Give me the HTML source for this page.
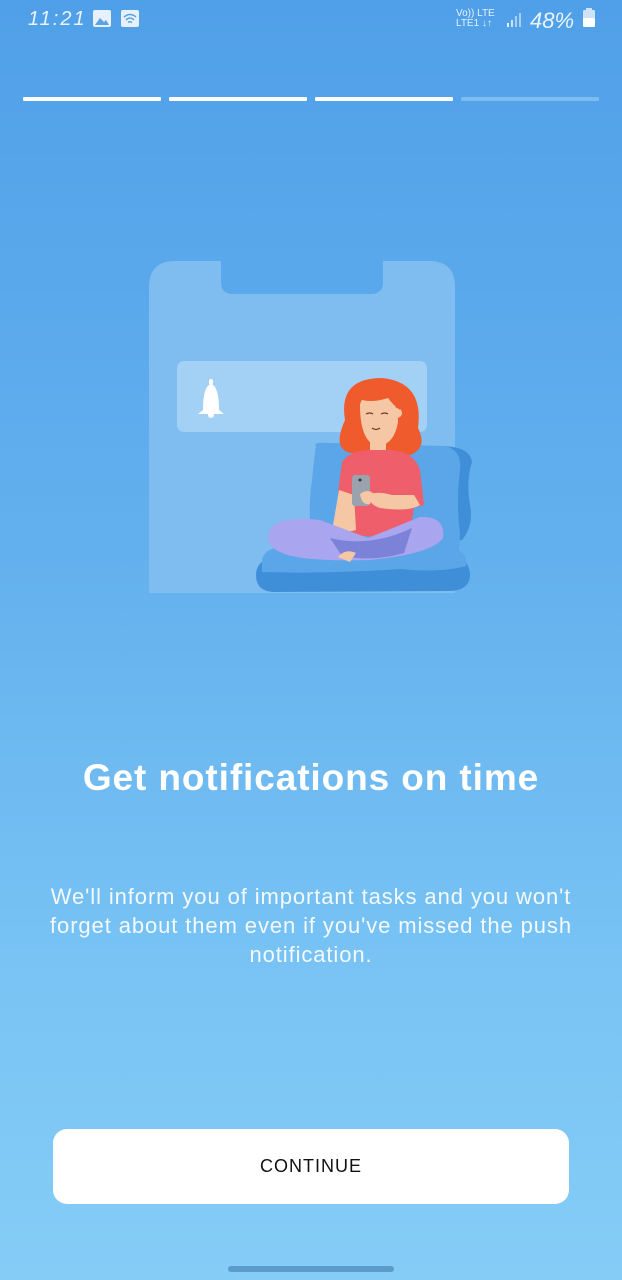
<!DOCTYPE html>
<html><head><meta charset="utf-8">
<style>
html,body{margin:0;padding:0}
body{width:622px;height:1280px;overflow:hidden;position:relative;background:linear-gradient(180deg,#50a0e9 0%,#64b1ee 45%,#78c3f4 75%,#85cdf7 100%);font-family:"Liberation Sans",sans-serif;color:#fff}
.bar{position:absolute;top:97px;height:4px;width:138px;background:#fff;border-radius:1px}
.sb{position:absolute;top:8px;font-size:20px;color:#eaf4fd}
h1{position:absolute;top:756px;left:0;width:622px;text-align:center;margin:0;font-size:37px;line-height:44px;font-weight:bold;letter-spacing:0.9px}
p{position:absolute;top:882px;left:0;width:622px;text-align:center;margin:0;font-size:22px;line-height:29px;color:#f3f9fe;letter-spacing:0.9px;white-space:nowrap}
.btn{position:absolute;left:53px;top:1129px;width:516px;height:75px;background:#fff;border-radius:14px;color:#111;font-size:18px;font-weight:500;text-align:center;line-height:75px;letter-spacing:1px}
.home{position:absolute;left:228px;top:1266px;width:166px;height:6px;border-radius:3px;background:#5c9ccb}
</style></head><body>
<div class="sb" style="left:28px;font-style:italic;letter-spacing:2px">11:21</div>
<svg style="position:absolute;left:93px;top:10px" width="50" height="18"><rect x="0" y="0" width="18" height="17" rx="2" fill="#e6f1fc"/><path d="M2 15 L7 8 L11 12 L13 10 L16 15Z" fill="#5aa2e3"/><rect x="28" y="0" width="18" height="17" rx="2" fill="#e6f1fc"/><path d="M31 7 Q37 2 43 7 M33 10 Q37 6 41 10 M35 12.5 Q37 11 39 12.5" stroke="#5aa2e3" stroke-width="1.5" fill="none"/></svg>
<div style="position:absolute;left:456px;top:9px;font-size:10px;line-height:10px;color:#e6f1fc">Vo)) LTE<br>LTE1 ↓↑</div>
<svg style="position:absolute;left:506px;top:12px" width="16" height="16"><rect x="1" y="11" width="2" height="4" fill="#e6f1fc"/><rect x="5" y="8" width="2" height="7" fill="#cfe3f7" /><rect x="9" y="4" width="2" height="11" fill="#a9cff0"/><rect x="13" y="1" width="2" height="14" fill="#a9cff0"/></svg>
<div class="sb" style="left:530px;font-style:italic;font-size:22px">48%</div>
<svg style="position:absolute;left:582px;top:8px" width="14" height="20"><rect x="4" y="0" width="6" height="3" fill="#cfe3f7"/><rect x="1" y="2" width="12" height="17" rx="1.5" fill="#cfe3f7"/><rect x="1" y="10" width="12" height="9" rx="1.5" fill="#fff"/></svg>
<div class="bar" style="left:23px"></div><div class="bar" style="left:169px"></div><div class="bar" style="left:315px"></div><div class="bar" style="left:461px;background:#7dbcf0"></div>
<svg style="position:absolute;left:0;top:0" width="622" height="700">
<path d="M175 261 H221 V282 Q221 294 233 294 H371 Q383 294 383 282 V261 H429 Q455 261 455 287 V593 H149 V287 Q149 261 175 261Z" fill="#7fbcef"/>
<rect x="177" y="361" width="250" height="71" rx="7" fill="#a3d0f5"/>
<path d="M203 410 Q203 386 211 384 Q219 386 219 410 L224 414 H198Z" fill="#fff"/><rect x="209" y="379" width="4" height="6" rx="2" fill="#fff"/><circle cx="211" cy="415" r="3" fill="#fff"/>
<path d="M440 446 Q470 446 472 462 Q466 480 470 505 Q474 525 462 540 L430 545 Z" fill="#3f8fd8"/>
<path d="M316 446 Q312 442 330 443 L445 446 Q462 450 460 470 Q456 500 460 535 L458 565 L316 565 Q306 520 312 480 Q314 460 316 446Z" fill="#5aa6e8"/>
<path d="M256 575 Q256 558 280 556 L450 556 Q470 558 470 575 Q470 590 450 591 L275 592 Q256 592 256 575Z" fill="#3f8fd8"/>
<path d="M262 560 Q264 545 300 545 L440 545 Q468 547 466 566 Q440 573 400 569 Q330 574 262 572Z" fill="#5aa6e8"/>
<path d="M345 420 Q338 378 382 378 Q424 382 418 428 Q428 448 410 455 Q395 458 388 450 L370 450 Q350 458 342 448 Q336 440 345 420Z" fill="#ef5b2d"/>
<rect x="370" y="436" width="16" height="16" fill="#f6c7a4"/>
<path d="M360 405 Q362 392 384 394 Q398 400 398 422 Q394 446 376 446 Q360 440 360 405Z" fill="#f6c7a4"/>
<circle cx="397" cy="413" r="5" fill="#f6c7a4"/>
<path d="M356 398 Q375 384 400 396 L400 410 Q392 404 388 398 Q370 404 356 398Z" fill="#ef5b2d"/>
<path d="M366 414 q4 -2 7 0 M381 414 q4 -2 7 0 M372 428 q4 3 8 0" stroke="#6b3b2a" stroke-width="1.2" fill="none"/>
<path d="M342 462 Q350 450 372 450 L392 450 Q414 452 420 470 L424 505 L414 508 L412 520 Q410 535 380 537 L350 535 Q345 505 338 492 Z" fill="#ee5f6b"/>
<path d="M339 490 L333 525 Q338 535 356 530 L354 495Z" fill="#f6c7a4"/>
<path d="M420 505 Q410 512 380 508 Q370 505 368 496 Q374 490 392 495 L414 495Z" fill="#f6c7a4"/>
<rect x="352" y="475" width="18" height="31" rx="3" fill="#9aa3ad"/>
<circle cx="360" cy="480" r="1.5" fill="#333"/>
<path d="M360 494 Q368 488 374 494 L370 504 Q362 506 360 494Z" fill="#f6c7a4"/>
<path d="M270 530 Q278 515 320 520 L368 538 L420 517 Q446 516 443 538 Q432 554 370 560 Q300 562 280 552 Q264 545 270 530Z" fill="#a9a5ee"/>
<path d="M330 538 Q370 548 412 528 L404 553 Q372 562 342 556Z" fill="#7c82d8"/>
<path d="M338 557 Q345 548 356 553 L350 562 Z" fill="#f6c7a4"/>
</svg>
<h1>Get notifications on time</h1>
<p>We'll inform you of important tasks and you won't<br>forget about them even if you've missed the push<br>notification.</p>
<div class="btn">CONTINUE</div>
<div class="home"></div>
</body></html>
